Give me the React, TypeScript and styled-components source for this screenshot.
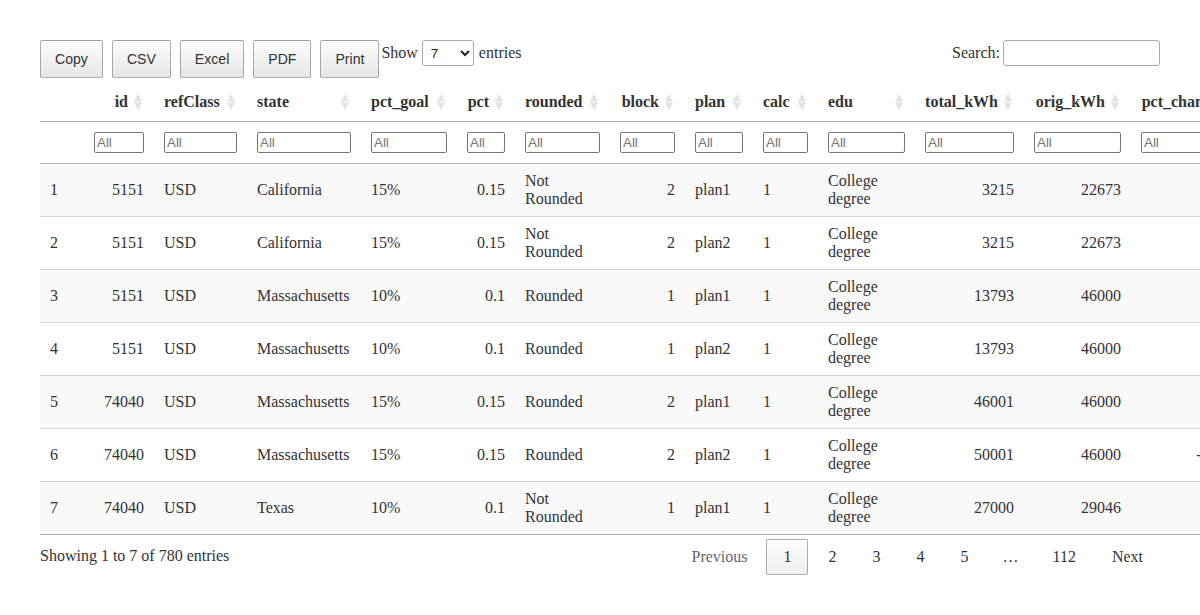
import React from "react";
import styled, { createGlobalStyle } from "styled-components";

const GlobalStyle = createGlobalStyle`
  html, body {
    margin: 0;
    padding: 0;
    overflow: hidden;
    background: #ffffff;
  }
  body {
    font-family: "Liberation Serif", "Times New Roman", serif;
    font-size: 16px;
    color: #333333;
  }
  * { box-sizing: border-box; }
`;

type Align = "left" | "right";

interface Column {
  key: string;
  label: string;
  width: number;
  align: Align;
  sortable: boolean;
  filter: boolean;
}

const columns: Column[] = [
  { key: "n", label: "", width: 44, align: "left", sortable: false, filter: false },
  { key: "id", label: "id", width: 70, align: "right", sortable: true, filter: true },
  { key: "refClass", label: "refClass", width: 93, align: "left", sortable: true, filter: true },
  { key: "state", label: "state", width: 114, align: "left", sortable: true, filter: true },
  { key: "pct_goal", label: "pct_goal", width: 96, align: "left", sortable: true, filter: true },
  { key: "pct", label: "pct", width: 58, align: "right", sortable: true, filter: true },
  { key: "rounded", label: "rounded", width: 95, align: "left", sortable: true, filter: true },
  { key: "block", label: "block", width: 75, align: "right", sortable: true, filter: true },
  { key: "plan", label: "plan", width: 68, align: "left", sortable: true, filter: true },
  { key: "calc", label: "calc", width: 65, align: "left", sortable: true, filter: true },
  { key: "edu", label: "edu", width: 97, align: "left", sortable: true, filter: true },
  { key: "total_kWh", label: "total_kWh", width: 109, align: "right", sortable: true, filter: true },
  { key: "orig_kWh", label: "orig_kWh", width: 107, align: "right", sortable: true, filter: true },
  { key: "pct_change", label: "pct_change", width: 114, align: "right", sortable: true, filter: true },
];

type Row = Record<string, string>;

const rows: Row[] = [
  { n: "1", id: "5151", refClass: "USD", state: "California", pct_goal: "15%", pct: "0.15", rounded: "Not Rounded", block: "2", plan: "plan1", calc: "1", edu: "College degree", total_kWh: "3215", orig_kWh: "22673", pct_change: "86%" },
  { n: "2", id: "5151", refClass: "USD", state: "California", pct_goal: "15%", pct: "0.15", rounded: "Not Rounded", block: "2", plan: "plan2", calc: "1", edu: "College degree", total_kWh: "3215", orig_kWh: "22673", pct_change: "86%" },
  { n: "3", id: "5151", refClass: "USD", state: "Massachusetts", pct_goal: "10%", pct: "0.1", rounded: "Rounded", block: "1", plan: "plan1", calc: "1", edu: "College degree", total_kWh: "13793", orig_kWh: "46000", pct_change: "70%" },
  { n: "4", id: "5151", refClass: "USD", state: "Massachusetts", pct_goal: "10%", pct: "0.1", rounded: "Rounded", block: "1", plan: "plan2", calc: "1", edu: "College degree", total_kWh: "13793", orig_kWh: "46000", pct_change: "70%" },
  { n: "5", id: "74040", refClass: "USD", state: "Massachusetts", pct_goal: "15%", pct: "0.15", rounded: "Rounded", block: "2", plan: "plan1", calc: "1", edu: "College degree", total_kWh: "46001", orig_kWh: "46000", pct_change: "0%" },
  { n: "6", id: "74040", refClass: "USD", state: "Massachusetts", pct_goal: "15%", pct: "0.15", rounded: "Rounded", block: "2", plan: "plan2", calc: "1", edu: "College degree", total_kWh: "50001", orig_kWh: "46000", pct_change: "-8.7%" },
  { n: "7", id: "74040", refClass: "USD", state: "Texas", pct_goal: "10%", pct: "0.1", rounded: "Not Rounded", block: "1", plan: "plan1", calc: "1", edu: "College degree", total_kWh: "27000", orig_kWh: "29046", pct_change: "7%" },
];

const Page = styled.div`
  width: 1120px;
  margin: 40px;
`;

const TopBar = styled.div`
  display: flex;
  align-items: flex-start;
  height: 38px;
  margin-bottom: 5px;
`;

const ButtonGroup = styled.div`
  display: flex;
  gap: 9px;
`;

const DtButton = styled.button`
  font-family: "Liberation Sans", Arial, sans-serif;
  font-size: 14.08px;
  line-height: 22px;
  padding: 7px 14px;
  height: 38px;
  color: #333333;
  border: 1px solid rgba(0, 0, 0, 0.3);
  border-radius: 2px;
  background: linear-gradient(to bottom, #fdfdfd 0%, #e6e6e6 100%);
  cursor: pointer;
`;

const LengthLabel = styled.label`
  display: flex;
  align-items: center;
  gap: 4px;
  height: 26px;
  margin-left: 2px;
  white-space: nowrap;
`;

const LengthSelect = styled.select`
  width: 52px;
  height: 26px;
  border: 1px solid #aaaaaa;
  border-radius: 3px;
  padding: 0 4px;
  background: transparent;
  color: #222222;
  font-family: "Liberation Sans", Arial, sans-serif;
  font-size: 13.33px;
  margin-right: 1px;
`;

const SearchLabel = styled.label`
  margin-left: auto;
  display: flex;
  align-items: center;
  height: 26px;
  white-space: nowrap;
`;

const SearchInput = styled.input`
  margin-left: 3px;
  width: 157px;
  height: 26px;
  border: 1px solid #aaaaaa;
  border-radius: 3px;
  padding: 5px;
  background: transparent;
`;

const Table = styled.table<{ $w: number }>`
  width: ${(p) => p.$w}px;
  table-layout: fixed;
  border-collapse: separate;
  border-spacing: 0;
  line-height: 18px;
`;

const Col = styled.col<{ $w: number }>`
  width: ${(p) => p.$w}px;
`;

const HeadCell = styled.th<{ $align: Align }>`
  position: relative;
  padding: 10px 26px 10px 10px;
  text-align: ${(p) => p.$align};
  font-weight: bold;
  color: #333333;
  white-space: nowrap;
  border-bottom: 1px solid rgba(0, 0, 0, 0.3);
`;

const SortIcon = styled.svg`
  position: absolute;
  right: 12px;
  top: 50%;
  margin-top: -9px;
  width: 8px;
  height: 18px;
`;

const FilterCell = styled.td`
  padding: 10px;
  border-bottom: 1px solid rgba(0, 0, 0, 0.3);
`;

const FilterInput = styled.input`
  display: block;
  width: 100%;
  height: 21px;
  padding: 1px 2px;
  border: 1px solid #767676;
  border-radius: 2px;
  font-family: "Liberation Sans", Arial, sans-serif;
  font-size: 13.33px;
  color: #222222;
  background: #ffffff;
  &::placeholder {
    color: #757575;
  }
`;

const BodyRow = styled.tr<{ $striped: boolean }>`
  background: ${(p) => (p.$striped ? "#f9f9f9" : "#ffffff")};
`;

const Cell = styled.td<{ $align: Align; $first: boolean; $last: boolean }>`
  padding: 8px 10px;
  text-align: ${(p) => p.$align};
  vertical-align: middle;
  border-top: ${(p) => (p.$first ? "none" : "1px solid rgba(0, 0, 0, 0.15)")};
  border-bottom: ${(p) => (p.$last ? "1px solid rgba(0, 0, 0, 0.3)" : "none")};
`;

const Footer = styled.div`
  display: flex;
  justify-content: space-between;
  align-items: flex-start;
`;

const Info = styled.div`
  padding-top: 12px;
  line-height: 18px;
`;

const Pagination = styled.div`
  display: flex;
  align-items: center;
  padding-top: 4px;
`;

const PageButton = styled.a<{ $current?: boolean; $disabled?: boolean }>`
  display: inline-block;
  padding: 8px 16px;
  margin-left: 2px;
  margin-right: ${(p) => (p.$current ? "1px" : "0")};
  line-height: 18px;
  text-align: center;
  border-radius: 2px;
  border: 1px solid ${(p) => (p.$current ? "rgba(0, 0, 0, 0.3)" : "transparent")};
  background: ${(p) =>
    p.$current ? "linear-gradient(to bottom, #fdfdfd 0%, #f0f0f0 100%)" : "transparent"};
  color: ${(p) => (p.$disabled ? "#666666" : "#333333")};
  cursor: ${(p) => (p.$disabled ? "default" : "pointer")};
`;

const Ellipsis = styled.span`
  display: inline-block;
  padding: 0 15px;
  margin-left: 2px;
  line-height: 18px;
`;

const Sort = () => (
  <SortIcon viewBox="0 0 8 18" aria-hidden="true">
    <polygon points="4,1 8,8.4 0,8.4" fill="#e2e2e2" />
    <polygon points="0,9.6 8,9.6 4,17" fill="#e2e2e2" />
  </SortIcon>
);

export default function App() {
  const tableWidth = columns.reduce((s, c) => s + c.width, 0);
  return (
    <>
      <GlobalStyle />
      <Page>
        <TopBar>
          <ButtonGroup>
            {["Copy", "CSV", "Excel", "PDF", "Print"].map((b) => (
              <DtButton key={b}>{b}</DtButton>
            ))}
          </ButtonGroup>
          <LengthLabel>
            Show
            <LengthSelect defaultValue="7">
              <option value="7">7</option>
              <option value="10">10</option>
              <option value="25">25</option>
              <option value="50">50</option>
              <option value="100">100</option>
            </LengthSelect>
            entries
          </LengthLabel>
          <SearchLabel>
            Search:
            <SearchInput type="search" />
          </SearchLabel>
        </TopBar>

        <Table $w={tableWidth}>
          <colgroup>
            {columns.map((c) => (
              <Col key={c.key} $w={c.width} />
            ))}
          </colgroup>
          <thead>
            <tr>
              {columns.map((c) => (
                <HeadCell key={c.key} $align={c.align}>
                  {c.label}
                  {c.sortable && <Sort />}
                </HeadCell>
              ))}
            </tr>
            <tr>
              {columns.map((c) => (
                <FilterCell key={c.key}>
                  {c.filter && <FilterInput type="search" placeholder="All" />}
                </FilterCell>
              ))}
            </tr>
          </thead>
          <tbody>
            {rows.map((r, i) => (
              <BodyRow key={r.n} $striped={i % 2 === 0}>
                {columns.map((c) => (
                  <Cell
                    key={c.key}
                    $align={c.align}
                    $first={i === 0}
                    $last={i === rows.length - 1}
                  >
                    {r[c.key]}
                  </Cell>
                ))}
              </BodyRow>
            ))}
          </tbody>
        </Table>

        <Footer>
          <Info>Showing 1 to 7 of 780 entries</Info>
          <Pagination>
            <PageButton $disabled>Previous</PageButton>
            <PageButton $current>1</PageButton>
            <PageButton>2</PageButton>
            <PageButton>3</PageButton>
            <PageButton>4</PageButton>
            <PageButton>5</PageButton>
            <Ellipsis>…</Ellipsis>
            <PageButton>112</PageButton>
            <PageButton>Next</PageButton>
          </Pagination>
        </Footer>
      </Page>
    </>
  );
}
